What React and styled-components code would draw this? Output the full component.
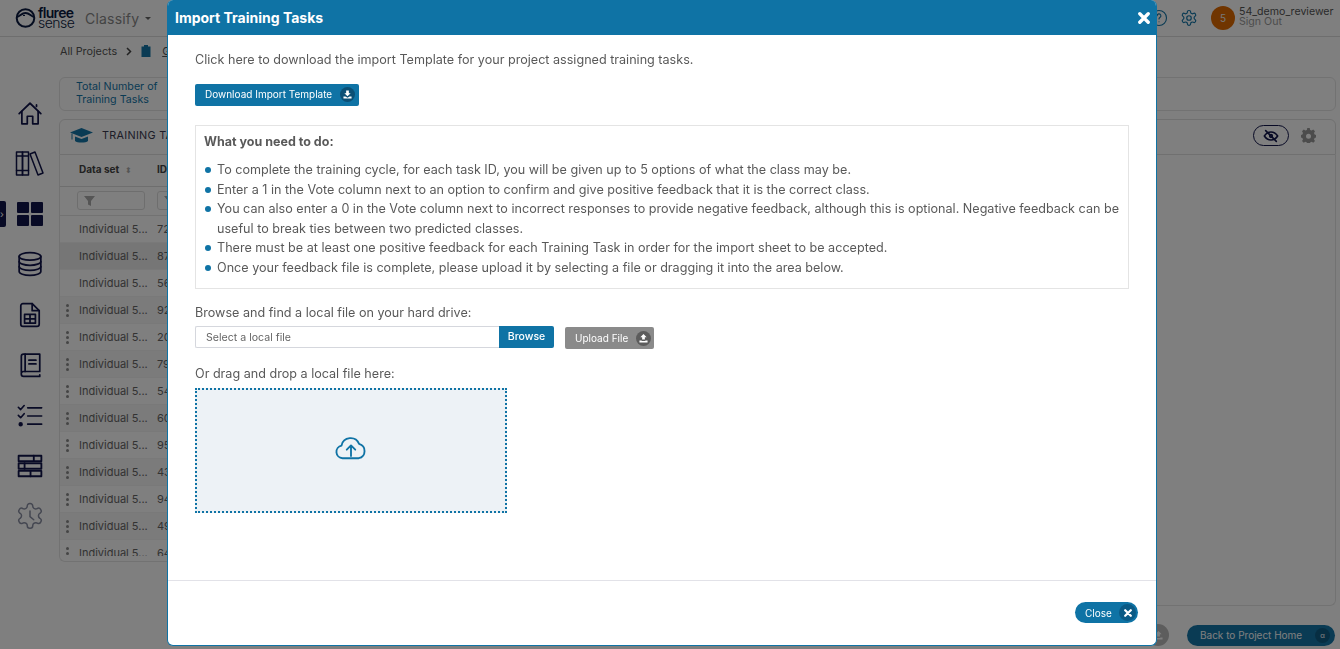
import React from "react";
import styled, { createGlobalStyle } from "styled-components";

const Global = createGlobalStyle`
  html, body { margin: 0; padding: 0; height: 649px; overflow: hidden; background: #fff; }
  body { font-family: Inter, "Liberation Sans", sans-serif; color: #555; }
  * { box-sizing: border-box; }
`;

const Page = styled.div`width: 1340px; height: 649px; display: flex; flex-direction: column; overflow: hidden;`;
const TopBar = styled.header`height: 37px; flex: none; display: flex; align-items: center; padding: 0 2px 0 15px; border-bottom: 1px solid #ddd; background: #fff;`;
const Logo = styled.div`display: flex; align-items: center; gap: 2px; width: 70px;`;
const LogoWords = styled.div`display: flex; flex-direction: column; font-size: 14px; line-height: 10px; color: #0b1a40; font-weight: 600; letter-spacing: -0.7px;`;
const LogoSense = styled.span`font-weight: 300; letter-spacing: -0.5px;`;
const AppName = styled.div`font-size: 14px; color: #888; display: flex; align-items: center; gap: 6px; letter-spacing: .2px;`;
const Caret = styled.span`width: 0; height: 0; border: 3.5px solid transparent; border-top-color: #666; margin-top: 4px;`;
const Spacer = styled.div`flex: 1;`;
const UserArea = styled.div`display: flex; align-items: center;`;
const HeaderIcon = styled.span`display: flex; width: 30px; justify-content: center; color: #1476a8;`;
const Avatar = styled.div`width: 24px; height: 24px; border-radius: 50%; background: #e06a00; color: #eee; font-size: 10px; display: flex; align-items: center; justify-content: center; margin: 0 4px 0 7px;`;
const UserText = styled.div`display: flex; flex-direction: column; font-size: 10.6px; line-height: 10px; color: #555; width: 99px; margin-top: -2px; white-space: nowrap;`;
const SignOut = styled.span`color: #999;`;

const Body = styled.div`flex: 1; display: flex; min-height: 0;`;
const Sidebar = styled.nav`width: 59px; flex: none; display: flex; flex-direction: column; align-items: center; padding-top: 51px; position: relative;`;
const SideSlot = styled.div`height: 50.4px; flex: none; display: flex; align-items: center; justify-content: center; color: #10144a; margin-left: 1px;`;
const SideTab = styled.span`position: absolute; left: 0; top: 164px; width: 6px; height: 26px; background: #10144a; border-radius: 0 2px 2px 0; color: #fff; font-size: 10px; line-height: 26px;`;

const Main = styled.main`flex: 1; display: flex; flex-direction: column; padding: 0 4px 0 0; min-width: 0;`;
const Crumbs = styled.div`height: 40px; flex: none; display: flex; align-items: center; font-size: 10.8px; color: #555; padding: 0 0 12px 1px;`;
const CrumbSep = styled.svg`margin: 0 9px 0 9px;`;
const CrumbLink = styled.span`text-decoration: underline; margin-left: 11px;`;
const StatCard = styled.section`height: 34px; flex: none; border: 1px solid #e5e5e5; border-radius: 6px; padding: 2px 16px; font-size: 10.7px; line-height: 13px; color: #1476a8;`;
const Panel = styled.section`height: 487px; flex: none; margin-top: 8px; display: flex; flex-direction: column;`;
const PanelHead = styled.div`height: 36px; flex: none; display: flex; align-items: center; padding: 0 19px 3px 10px; border: 1px solid #e0e0e0; border-radius: 6px 6px 0 0; gap: 9px; font-size: 10.8px; color: #3a3a50; letter-spacing: .3px;`;
const EyePill = styled.span`width: 36px; height: 21px; border: 1px solid #10144a; border-radius: 11px; display: flex; align-items: center; justify-content: center; color: #10144a; margin-right: 3px;`;
const GearBtn = styled.span`display: flex; color: #999;`;
const PanelBody = styled.div`flex: 1; display: flex; min-height: 0;`;
const TableCol = styled.div`width: 300px; height: 407px; flex: none; border-bottom: 1px solid #e5e5e5; border-left: 1px solid #e5e5e5; border-radius: 0 0 0 6px; display: flex; flex-direction: column; overflow: hidden;`;
const RestCol = styled.div`flex: 1; border-bottom: 1px solid #e5e5e5; border-right: 1px solid #e5e5e5; border-radius: 0 0 6px 0;`;
const HeadRow = styled.div`height: 32px; flex: none; display: grid; grid-template-columns: 19px 78px 1fr; align-items: center; padding-bottom: 4px; font-size: 10px; font-weight: 700; color: #444; border-bottom: 1px solid #ddd;`;
const SortMark = styled.span`color: #aaa; font-weight: 400; font-size: 8px; margin-left: 6px;`;
const FilterRow = styled.div`height: 29px; flex: none; display: flex; gap: 12px; align-items: flex-start; padding: 4px 0 0 17px; border-bottom: 1px solid #e5e5e5;`;
const FilterBox = styled.span`width: 68px; height: 19px; flex: none; border: 1px solid #ddd; border-radius: 3px; display: flex; align-items: center; padding-left: 6px; color: #aaa;`;
const Rows = styled.div`height: 340px; flex: none; overflow: hidden;`;
const Row = styled.div`height: 27px; display: grid; grid-template-columns: 19px 78px 1fr; align-items: center; font-size: 11px; color: #666; background: ${p => p.$tone}; border-bottom: 1px solid #f3f3f3;`;
const Dots = styled.span`display: flex; flex-direction: column; gap: 2px; align-items: center; padding-right: 5px;`;
const Dot = styled.i`width: 3px; height: 3px; border-radius: 50%; background: #8a8a8a;`;

const Fab = styled.div`height: 26px; flex: none; display: flex; align-items: center; justify-content: flex-end; margin-top: 16px; gap: 18px; padding-right: 1px;`;
const FabRound = styled.span`width: 22px; height: 22px; border-radius: 50%; background: #bbb; color: #fff; display: flex; align-items: center; justify-content: center;`;
const BackBtn = styled.div`width: 148px; height: 21px; border-radius: 11px; background: #1476a8; color: #fff; font-size: 10px; display: flex; align-items: center; justify-content: space-between; padding: 0 5px 0 13px;`;
const BackBadge = styled.span`width: 15px; height: 15px; border-radius: 50%; background: #0f5d85; display: flex; align-items: center; justify-content: center; font-size: 7px;`;

const Backdrop = styled.div`position: fixed; inset: 0; background: rgba(0,0,0,.5);`;
const Modal = styled.div`position: fixed; left: 167px; top: 0; width: 990px; height: 646px; background: #fff; border: 1px solid #0f73a5; border-top: 0; border-radius: 6px; display: flex; flex-direction: column; overflow: hidden;`;
const ModalHead = styled.div`height: 35px; flex: none; background: #0f73a5; color: #fff; display: flex; align-items: center; justify-content: space-between; padding: 0 6px 0 7px; font-size: 14px; font-weight: 700;`;
const ModalBody = styled.div`flex: 1; padding: 16px 27px 0; min-height: 0; font-size: 12.6px; color: #595959;`;
const Intro = styled.p`margin: 0; line-height: 17px;`;
const PrimaryBtn = styled.button`height: 22px; margin-top: 16px; padding: 0 4px 2px 10px; border: 0; border-radius: 2px; background: #0f73a5; color: #fff; font: 10px Inter, sans-serif; display: flex; align-items: center; gap: 8px;`;
const BtnBadge = styled.span`width: ${p => p.$s || 15}px; height: ${p => p.$s || 15}px; border-radius: 50%; background: ${p => p.$bg}; display: flex; align-items: center; justify-content: center; color: #fff;`;
const Steps = styled.div`margin-top: 19px; border: 1px solid #e4e4e4; height: 164px; padding: 7px 8px;`;
const StepsTitle = styled.div`font-weight: 700; font-size: 12.5px; line-height: 17px; margin-bottom: 10px;`;
const StepList = styled.ul`margin: 0; padding: 0; list-style: none;`;
const Step = styled.li`position: relative; padding-left: 13px; line-height: 19.5px;
  &::before { content: ""; position: absolute; left: 1px; top: 7px; width: 6px; height: 6px; border-radius: 50%; background: #0f73a5; }
`;
const FieldLabel = styled.div`margin-top: ${p => p.$top}px; line-height: 17px;`;
const FileRow = styled.div`display: flex; align-items: flex-start; margin-top: 5px;`;
const FileInput = styled.div`width: 304px; height: 22px; border: 1px solid #d5d7dd; border-right: 0; border-radius: 2px 0 0 2px; font-size: 10.6px; padding-left: 10px; display: flex; align-items: center; color: #666;`;
const Browse = styled.button`width: 55px; height: 22px; border: 0; border-radius: 0 2px 2px 0; background: #0f73a5; color: #fff; font: 500 10.5px Inter, sans-serif; padding-bottom: 2px;`;
const UploadBtn = styled.button`width: 89px; height: 22px; margin: 1px 0 0 11px; padding: 0 3px 0 10px; border: 0; border-radius: 2px; background: #8a8a8a; color: #fff; font: 10px Inter, sans-serif; display: flex; align-items: center; justify-content: space-between;`;
const DropZone = styled.div`width: 312px; height: 125px; margin-top: 6px; border: 2px dotted #0f73a5; background: #edf2f6; display: flex; align-items: center; justify-content: center; color: #0f73a5; padding-bottom: 3px;`;
const ModalFoot = styled.div`height: 65px; flex: none; border-top: 1px solid #e2e2e8; display: flex; justify-content: flex-end; align-items: flex-start; padding: 21px 18px 0 0;`;
const CloseBtn = styled.button`width: 63px; height: 21px; border: 0; border-radius: 11px; background: #0f73a5; color: #fff; font: 10px Inter, sans-serif; display: flex; align-items: center; justify-content: space-between; padding: 0 2px 0 10px;`;

const Stroke = ({ s = 26, children, w = 1.6, vb = 24 }) => (
  <svg width={s} height={s} viewBox={`0 0 ${vb} ${vb}`} fill="none" stroke="currentColor" strokeWidth={w} strokeLinecap="round" strokeLinejoin="round">{children}</svg>
);

const DownloadGlyph = () => (
  <svg width="9" height="9" viewBox="0 0 10 10" fill="#fff"><path d="M3.500 0.500h3v3h2L5 7 1.500 3.500h2z" /><path d="M0.500 7.200h2.200L5 8.600l2.300-1.400h2.200v2.300h-9z" /></svg>
);
const UploadGlyph = () => (
  <svg width="9" height="9" viewBox="0 0 10 10" fill="#fff"><path d="M3.500 6h3V3.500h2L5 0 1.500 3.500h2z" /><path d="M0.500 7.200h2.500v.5h4v-.5h2.500v2.300h-9z" /></svg>
);
const Cross = ({ s = 9 }) => (
  <svg width={s} height={s} viewBox="0 0 10 10" stroke="#fff" strokeWidth="2.8" strokeLinecap="round"><path d="M1.500 1.500l7 7M8.500 1.500l-7 7" /></svg>
);
const Gear = ({ s = 18, w = 1.6, children }) => (
  <Stroke s={s} w={w}><path d="M12.200 2h-.4a2 2 0 0 0-2 2v.2a2 2 0 0 1-1 1.700l-.4.2a2 2 0 0 1-2 0l-.2-.1a2 2 0 0 0-2.700.7l-.2.4a2 2 0 0 0 .7 2.700l.2.1a2 2 0 0 1 1 1.700v.5a2 2 0 0 1-1 1.700l-.2.1a2 2 0 0 0-.7 2.700l.2.4a2 2 0 0 0 2.700.7l.2-.1a2 2 0 0 1 2 0l.4.2a2 2 0 0 1 1 1.700v.2a2 2 0 0 0 2 2h.4a2 2 0 0 0 2-2v-.2a2 2 0 0 1 1-1.700l.4-.2a2 2 0 0 1 2 0l.2.1a2 2 0 0 0 2.700-.7l.2-.4a2 2 0 0 0-.7-2.700l-.2-.1a2 2 0 0 1-1-1.700v-.5a2 2 0 0 1 1-1.700l.2-.1a2 2 0 0 0 .7-2.700l-.2-.4a2 2 0 0 0-2.700-.7l-.2.1a2 2 0 0 1-2 0l-.4-.2a2 2 0 0 1-1-1.700V4a2 2 0 0 0-2-2z" />{children || <circle cx="12" cy="12" r="3" />}</Stroke>
);

const CogTint = styled.span`color: #8a8fa3; display: flex;`;

const sideIcons = [
  <Stroke key="home"><path d="M2 12.500 12 3l10 9.500" /><path d="M18 6V4.500" /><path d="M4.500 10.500V22h5v-7h5v7h5V10.500" /></Stroke>,
  <Stroke key="books" s={30} vb={30} w={1.5}><rect x="1.500" y="3" width="6" height="23" /><rect x="7.500" y="3" width="6" height="23" /><path d="M1.500 7h12M1.500 21.500h12" /><path d="M15 5l5-2 8 21-5 2z" /></Stroke>,
  <svg key="grid" width="26" height="24" viewBox="0 0 26 24" fill="currentColor"><rect x="0" y="0" width="12" height="11" rx="1" /><rect x="14" y="0" width="12" height="11" rx="1" /><rect x="0" y="13" width="12" height="11" rx="1" /><rect x="14" y="13" width="12" height="11" rx="1" /></svg>,
  <Stroke key="db"><ellipse cx="12" cy="5" rx="10" ry="3.500" /><path d="M2 5v14c0 1.900 4.500 3.500 10 3.500s10-1.600 10-3.500V5" /><path d="M2 9.700c0 1.900 4.500 3.500 10 3.500s10-1.600 10-3.500M2 14.400c0 1.900 4.500 3.500 10 3.500s10-1.600 10-3.500" /></Stroke>,
  <Stroke key="sheet"><path d="M14 1.500H5.500a2 2 0 0 0-2 2v17a2 2 0 0 0 2 2h13a2 2 0 0 0 2-2V8z" /><path d="M14 1.500V8h6.500" /><path d="M7 11.500h10v8H7zM7 15.500h10M12 11.500v8" /></Stroke>,
  <Stroke key="book"><path d="M4 19V4a2 2 0 0 1 2-2h15v16H6a2 2 0 0 0-2 2.500A2 2 0 0 0 6 22.500h15v-1.500" /><path d="M7.500 2v16M11 7.500h6.500M11 11h6.500" /></Stroke>,
  <Stroke key="list" s={28} w={1.4}><path d="M2 4.500l2 2 3-3.500M2 11.500l2 2 3-3.500" /><path d="M10 5h12M10 12h12M10 19h12" /><circle cx="4" cy="19" r="1.200" fill="currentColor" /></Stroke>,
  <Stroke key="rows" w={1.7}><rect x="1.500" y="2.500" width="21" height="5" /><rect x="1.500" y="9.500" width="21" height="5" /><rect x="1.500" y="16.500" width="21" height="5" /><path d="M15.500 2.500v5M7 9.500v5M12.500 16.500v5" /></Stroke>,
  <CogTint key="cog"><Gear s={30} w={1.2}><path d="M12 8v4.500l3 2.500" /></Gear></CogTint>,
];

const rowIds = ["72", "87", "56", "92", "20", "79", "54", "60", "95", "43", "94", "49", "64"];

function rowTone(i) {
  if (i === 1) return "#ececec";
  return i % 2 ? "#f7f7f7" : "#fff";
}

const steps = [
  "To complete the training cycle, for each task ID, you will be given up to 5 options of what the class may be.",
  "Enter a 1 in the Vote column next to an option to confirm and give positive feedback that it is the correct class.",
  "You can also enter a 0 in the Vote column next to incorrect responses to provide negative feedback, although this is optional. Negative feedback can be useful to break ties between two predicted classes.",
  "There must be at least one positive feedback for each Training Task in order for the import sheet to be accepted.",
  "Once your feedback file is complete, please upload it by selecting a file or dragging it into the area below.",
];

export default function App() {
  return (
    <Page>
      <Global />
      <TopBar>
        <Logo>
          <svg width="21" height="20" viewBox="0 0 21 20" fill="none" stroke="#0b1a40" strokeWidth="2"><circle cx="10.500" cy="10" r="8.800" /><path d="M2 9c3.500-1 4.500-4 8.500-4s5 3 8.500 4" /><path d="M8 7.500h2" strokeWidth="1" /></svg>
          <LogoWords><span>fluree</span><LogoSense>sense</LogoSense></LogoWords>
        </Logo>
        <AppName>Classify <Caret /></AppName>
        <Spacer />
        <UserArea>
          <HeaderIcon><Stroke s={18} w={1.5}><circle cx="12" cy="12" r="10" /><path d="M9.500 9a2.500 2.500 0 1 1 3.700 2.200c-.8.500-1.200 1-1.200 2M12 17h.01" /></Stroke></HeaderIcon>
          <HeaderIcon><Gear /></HeaderIcon>
          <Avatar>5</Avatar>
          <UserText><span>54_demo_reviewer</span><SignOut>Sign Out</SignOut></UserText>
        </UserArea>
      </TopBar>
      <Body>
        <Sidebar>
          <SideTab>›</SideTab>
          {sideIcons.map((ic, i) => <SideSlot key={i}>{ic}</SideSlot>)}
        </Sidebar>
        <Main>
          <Crumbs>
            <span>All Projects</span>
            <CrumbSep width="6" height="9" viewBox="0 0 6 9" fill="none" stroke="#444" strokeWidth="1.500"><path d="M1 1l3.500 3.500L1 8" /></CrumbSep>
            <svg width="10" height="12" viewBox="0 0 10 12" fill="#1476a8"><path d="M3 0h4v1.500h2.500V12H.5V1.500H3z" /></svg>
            <CrumbLink>G</CrumbLink>
          </Crumbs>
          <StatCard>Total Number of<br />Training Tasks</StatCard>
          <Panel>
            <PanelHead>
              <svg width="23" height="16" viewBox="0 0 23 16" fill="#1476a8"><path d="M11.500 0 23 4.500 11.500 9 0 4.500z" /><path d="M5 8.500 11.500 11 18 8.500V13c-2 2-11 2-13 0z" /><path d="M1.500 5.500h1v6h-1z" /></svg>
              <span>TRAINING TASKS</span>
              <Spacer />
              <EyePill><Stroke s={16} w={2.4}><path d="M2 12s4-6 10-6 10 6 10 6-4 6-10 6-10-6-10-6z" /><circle cx="12" cy="12" r="2" /><path d="M4 4l16 16" /></Stroke></EyePill>
              <GearBtn>
                <svg width="15" height="15" viewBox="0 0 24 24" fill="currentColor"><path fillRule="evenodd" d="M10 0h4l.6 3 2.400 1 2.600-1.600 2.800 2.800L20.800 7.800l1 2.400 2.200.8v4l-2.200.8-1 2.400 1.600 2.600-2.800 2.800-2.600-1.600-2.400 1-.6 2.200h-4l-.6-2.200-2.400-1-2.600 1.600-2.800-2.800 1.600-2.600-1-2.400L0 15v-4l2.200-.8 1-2.400-1.600-2.600 2.800-2.800L7 4l2.400-1zM12 9a4 4 0 1 0 0 8 4 4 0 0 0 0-8z" /></svg>
              </GearBtn>
            </PanelHead>
            <PanelBody>
              <TableCol>
                <HeadRow><span /><span>Data set<SortMark>⬍</SortMark></span><span>ID</span></HeadRow>
                <FilterRow>
                  <FilterBox><svg width="11" height="10" viewBox="0 0 11 10" fill="currentColor"><path d="M0 0h11L7 5v5L4 8.500V5z" /></svg></FilterBox>
                  <FilterBox><svg width="11" height="10" viewBox="0 0 11 10" fill="currentColor"><path d="M0 0h11L7 5v5L4 8.500V5z" /></svg></FilterBox>
                </FilterRow>
                <Rows>
                  {rowIds.map((id, i) => (
                    <Row key={id} $tone={rowTone(i)}>
                      {i > 2 ? <Dots><Dot /><Dot /><Dot /></Dots> : <span />}
                      <span>Individual 5...</span>
                      <span>{id}</span>
                    </Row>
                  ))}
                </Rows>
              </TableCol>
              <RestCol />
            </PanelBody>
          </Panel>
          <Fab>
            <FabRound><UploadGlyph /></FabRound>
            <BackBtn>Back to Project Home<BackBadge>α</BackBadge></BackBtn>
          </Fab>
        </Main>
      </Body>
      <Backdrop />
      <Modal>
        <ModalHead>Import Training Tasks<Cross s={12} /></ModalHead>
        <ModalBody>
          <Intro>Click here to download the import Template for your project assigned training tasks.</Intro>
          <PrimaryBtn>Download Import Template<BtnBadge $bg="#0b4f75"><DownloadGlyph /></BtnBadge></PrimaryBtn>
          <Steps>
            <StepsTitle>What you need to do:</StepsTitle>
            <StepList>{steps.map(s => <Step key={s}>{s}</Step>)}</StepList>
          </Steps>
          <FieldLabel $top={15}>Browse and find a local file on your hard drive:</FieldLabel>
          <FileRow>
            <FileInput>Select a local file</FileInput>
            <Browse>Browse</Browse>
            <UploadBtn>Upload File<BtnBadge $bg="#5c5c5c"><UploadGlyph /></BtnBadge></UploadBtn>
          </FileRow>
          <FieldLabel $top={16}>Or drag and drop a local file here:</FieldLabel>
          <DropZone>
            <Stroke s={34} w={1.3}><path d="M7 18.500H6a4.500 4.500 0 0 1-.7-8.900 6.500 6.500 0 0 1 12.400-1.200A5.200 5.200 0 0 1 17.500 18.500H7z" /><path d="M12 17v-7M9 12.500 12 9.500l3 3" /></Stroke>
          </DropZone>
        </ModalBody>
        <ModalFoot>
          <CloseBtn>Close<BtnBadge $bg="#0b5a85" $s={17}><Cross s={8} /></BtnBadge></CloseBtn>
        </ModalFoot>
      </Modal>
    </Page>
  );
}
